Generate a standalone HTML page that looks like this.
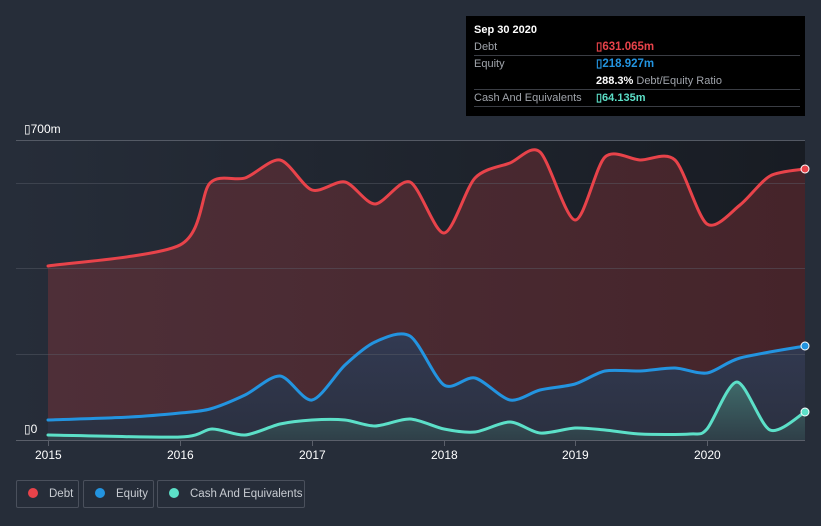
<!DOCTYPE html>
<html><head><meta charset="utf-8"><style>
body{margin:0;width:821px;height:526px;background:#262d39;font-family:"Liberation Sans",sans-serif;overflow:hidden;position:relative}
.tip{position:absolute;left:466px;top:16px;width:339px;height:100px;background:#000;color:#fff;font-size:11px}
.row{position:absolute;left:8px;width:326px;border-bottom:1px solid #3a3d44;height:16px;line-height:16px}
.lab{color:#a0a4ab}
.v{position:absolute;left:122px;font-weight:bold}
.leg{position:absolute;top:480px;height:26px;border:1px solid #4a505c;border-radius:2px;color:#c8ccd2;font-size:11.5px;line-height:26px;white-space:nowrap}
.leg i{display:inline-block;width:10px;height:10px;border-radius:50%;margin:0 11px 0 11px;vertical-align:-1px}
.ax{position:absolute;color:#fff;font-size:12px}
</style></head><body>
<svg width="821" height="526" style="position:absolute;left:0;top:0">
<defs>
<linearGradient id="bg" x1="0" x2="1" y1="0" y2="0"><stop offset="0" stop-color="#262d39"/><stop offset="1" stop-color="#181c23"/></linearGradient>
<linearGradient id="dg" x1="0" x2="1"><stop offset="0" stop-color="#4e2f38"/><stop offset="1" stop-color="#45242a"/></linearGradient>
<linearGradient id="eg" x1="0" y1="0" x2="0" y2="1"><stop offset="0" stop-color="#323a52"/><stop offset="1" stop-color="#2b3040"/></linearGradient>
<linearGradient id="cg" x1="0" y1="0" x2="0" y2="1"><stop offset="0" stop-color="#3f6a6a"/><stop offset="1" stop-color="#2f3f48"/></linearGradient>
</defs>
<rect x="16" y="140" width="789" height="300" fill="url(#bg)"/>
<path id="da" fill="url(#dg)"/>
<path id="ea" fill="url(#eg)"/>
<path id="ca" fill="url(#cg)"/>
<g stroke="#5a5f6a" stroke-opacity=".45" stroke-width="1"><line x1="16" x2="805" y1="140.5" y2="140.5" stroke-opacity=".9"/><line x1="16" x2="805" y1="183.5" y2="183.5"/><line x1="16" x2="805" y1="268.5" y2="268.5"/><line x1="16" x2="805" y1="354.5" y2="354.5"/></g>
<line x1="16" x2="805" y1="440.5" y2="440.5" stroke="#5a5f6a"/>
<g fill="none" stroke-width="3" stroke-linejoin="round" stroke-linecap="round">
<path id="dl" stroke="#e8434a"/>
<path id="el" stroke="#2394e0"/>
<path id="cl" stroke="#5ce0c8"/>
</g>
<g stroke="#fff" stroke-width="1"><circle cx="805" cy="169" r="4" fill="#e8434a"/><circle cx="805" cy="346" r="4" fill="#2394e0"/><circle cx="805" cy="412" r="4" fill="#5ce0c8"/></g>
<g stroke="#5a5f6a"><line x1="48.5" x2="48.5" y1="440" y2="446"/><line x1="180.5" x2="180.5" y1="440" y2="446"/><line x1="312.5" x2="312.5" y1="440" y2="446"/><line x1="444.5" x2="444.5" y1="440" y2="446"/><line x1="575.5" x2="575.5" y1="440" y2="446"/><line x1="707.5" x2="707.5" y1="440" y2="446"/></g>
</svg>
<div class="ax" style="left:24px;top:122px">▯700m</div>
<div class="ax" style="left:24px;top:422px">▯0</div>
<div class="ax" style="left:35px;top:448px">2015</div>
<div class="ax" style="left:167px;top:448px">2016</div>
<div class="ax" style="left:299px;top:448px">2017</div>
<div class="ax" style="left:431px;top:448px">2018</div>
<div class="ax" style="left:562px;top:448px">2019</div>
<div class="ax" style="left:694px;top:448px">2020</div>
<div class="tip">
<div style="position:absolute;left:8px;top:8px;font-weight:bold">Sep 30 2020</div>
<div class="row" style="top:23px"><span class="lab">Debt</span><span class="v" style="color:#e8434a;font-size:11.5px">▯631.065m</span></div>
<div class="row" style="top:40px;border:none"><span class="lab">Equity</span><span class="v" style="color:#2394e0;font-size:11.5px">▯218.927m</span></div>
<div class="row" style="top:57px"><span class="v" style="color:#fff">288.3% <span style="font-weight:normal;color:#a0a4ab">Debt/Equity Ratio</span></span></div>
<div class="row" style="top:74px"><span class="lab">Cash And Equivalents</span><span class="v" style="color:#5ce0c8">▯64.135m</span></div>
</div>
<div class="leg" style="left:16px;width:61px"><i style="background:#e8434a"></i>Debt</div>
<div class="leg" style="left:83px;width:69px"><i style="background:#2394e0"></i>Equity</div>
<div class="leg" style="left:157px;width:146px"><i style="background:#5ce0c8"></i>Cash And Equivalents</div>
<script>
function sm(p){var d="M"+p[0][0]+","+p[0][1];for(var i=0;i<p.length-1;i++){var a=p[i-1]||p[i],b=p[i],c=p[i+1],e=p[i+2]||c,t=0.14;
d+=" C"+(b[0]+(c[0]-a[0])*t)+","+(b[1]+(c[1]-a[1])*t)+" "+(c[0]-(e[0]-b[0])*t)+","+(c[1]-(e[1]-b[1])*t)+" "+c[0]+","+c[1];}return d;}
function P(s){return s.split(" ").map(function(q){return q.split(",").map(Number)});}
var D=P("48,266 180,245 210,183 245,178 280,160 312,190 345,182 375,204 410,182 444,233 475,178 510,163 540,152 575,220 605,157 640,160 675,160 707,224 740,205 770,176 805,169");
var E=P("48,420 130,417 180,413 210,409 245,395 280,376 312,400 345,365 375,342 410,336 444,385 475,378 510,400 540,390 575,384 605,371 640,371 675,368 707,373 740,358 805,346");
var C=P("48,435 180,437 212,429 245,435 280,424 312,420 345,420 375,426 410,419 444,429 475,432 510,422 540,433 575,428 605,430 640,434 690,434 707,429 737,382 770,430 805,412");
[["d",D],["e",E],["c",C]].forEach(function(k){var s=sm(k[1]);document.getElementById(k[0]+"l").setAttribute("d",s);document.getElementById(k[0]+"a").setAttribute("d",s+" L805,440 L48,440 Z");});
</script>
</body></html>
